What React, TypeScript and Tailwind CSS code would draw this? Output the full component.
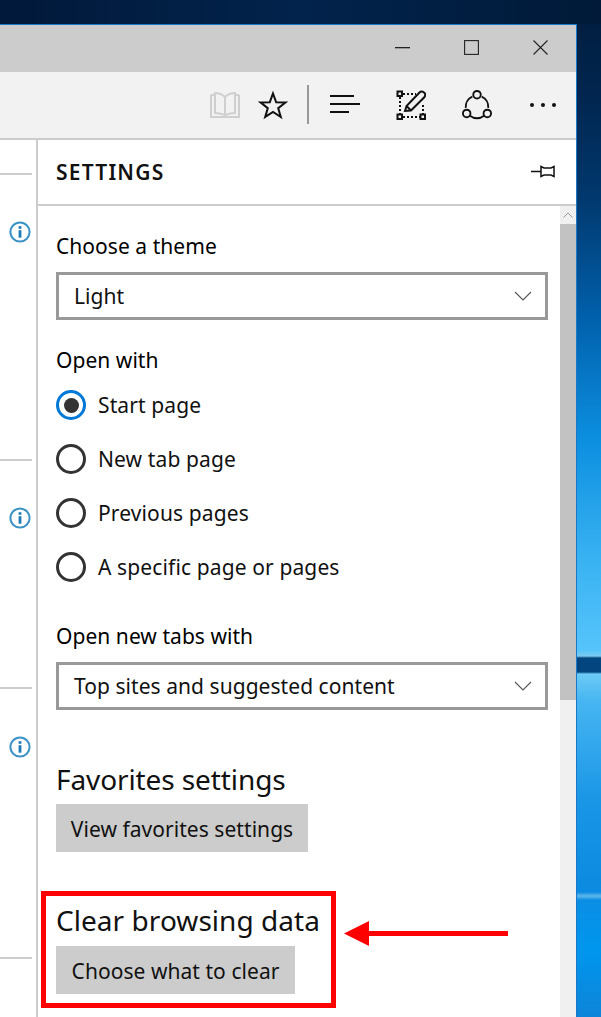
const Chevron = () => (
  <svg width="18" height="10" viewBox="0 0 18 10" className="shrink-0" fill="none" stroke="#555" strokeWidth="1.1">
    <path d="M1 1l8 8 8-8" />
  </svg>
);

const Select = ({ label }: { label: string }) => (
  <div className="flex h-[48px] w-[492px] items-center justify-between border-[3px] border-[#999] bg-white pl-[15px] pr-[13px]">
    <span className="text-[#111]">{label}</span>
    <Chevron />
  </div>
);

const Radio = ({ label, checked }: { label: string; checked?: boolean }) => (
  <div className="flex h-[54px] items-center gap-[12px]">
    {checked ? (
      <div className="flex h-[30px] w-[30px] items-center justify-center rounded-full border-[3px] border-[#0078d7]">
        <div className="h-[15px] w-[15px] rounded-full bg-[#333]" />
      </div>
    ) : (
      <div className="h-[30px] w-[30px] rounded-full border-[3px] border-[#333]" />
    )}
    <span className="tracking-[0.12px] text-[#111]">{label}</span>
  </div>
);

const Info = () => (
  <svg width="22" height="22" viewBox="0 0 22 22" fill="none">
    <circle cx="11" cy="11" r="9.6" stroke="#3d93c6" strokeWidth="2" />
    <rect x="9.6" y="9.2" width="2.8" height="7.5" fill="#1d7cb8" />
    <rect x="9.6" y="5.2" width="2.8" height="2.6" fill="#1d7cb8" />
  </svg>
);

const LeftRow = ({ h, icon, gap }: { h: string; icon?: boolean; gap?: string }) => (
  <div className={`flex flex-col ${h}`}>
    <div className="h-[2px] w-[32px] bg-[#ccc]" />
    {icon && (
      <div className={`ml-[9px] ${gap ?? "mt-[46px]"}`}>
        <Info />
      </div>
    )}
  </div>
);

export default function App() {
  return (
    <div
      className="relative h-[1017px] w-[601px] overflow-hidden bg-[linear-gradient(180deg,#001c3c_0px,#012650_100px,#01396f_200px,#0161ad_320px,#0c8fe0_440px,#39b2f2_560px,#56c4fb_650px,#7acbf0_656px,#03457f_658px,#03457f_672px,#6ccbf5_674px,#47b6f2_700px,#1a96e6_800px,#0a8ae0_892px,#5fb8ea_896px,#0a8ee4_900px,#0096ee_950px,#0d84d8_1017px)] font-['Noto_Sans',sans-serif] text-[21px] leading-[28px] tracking-[0.05px]"
    >
      <div className="h-[24px] bg-[linear-gradient(90deg,#01193a,#02234c_50%,#001a38)]" />
      <div className="flex h-[993px] w-[577px] flex-col border-r border-t border-[#1a78c8] bg-white">
        <div className="flex h-[47px] shrink-0 items-center bg-[#ccc] pb-[2px] pl-[395px]">
          <svg width="15" height="2" viewBox="0 0 15 2"><rect width="15" height="1.3" fill="#222" /></svg>
          <svg className="ml-[54px]" width="15" height="15" viewBox="0 0 15 15" fill="none" stroke="#222" strokeWidth="1.1"><rect x="0.6" y="0.6" width="13.800" height="13.800" /></svg>
          <svg className="ml-[54px]" width="15" height="15" viewBox="0 0 15 15" fill="none" stroke="#222" strokeWidth="1.1"><path d="M.5.5l14 14M14.500.5l-14 14" /></svg>
        </div>

        <div className="relative flex h-[68px] shrink-0 items-center border-b-2 border-[#ccc] bg-[#f2f2f2] pb-[1px] pl-[210px]">
          <svg width="30" height="28" viewBox="0 0 30 28" fill="none" stroke="#cfcfcf" strokeWidth="2">
            <path d="M1 4h4M25 4h4M1 4v22h28V4M15 6v18M15 6c-3-3-7-4-10-4v20c3 0 7 1 10 2 3-1 7-2 10-2V2c-3 0-7 1-10 4Z" />
          </svg>
          <svg className="ml-[18px]" width="30" height="30" viewBox="0 0 30 30" fill="none" stroke="#111" strokeWidth="2">
            <path d="M15 3.500l3.200 8.800 9.300.2-7.300 5.700 2.600 8.800L15 22l-7.800 4.900 2.600-8.800-7.300-5.700 9.300-.2Z" />
          </svg>
          <div className="ml-[19px] h-[39px] w-[2px] bg-[#999]" />
          <svg className="ml-[21px]" width="30" height="22" viewBox="0 0 30 22" fill="none" stroke="#111" strokeWidth="2">
            <path d="M0 2h24M0 10h30M0 18h19" />
          </svg>
          <svg className="ml-[36px]" width="30" height="30" viewBox="0 0 30 30" fill="none">
            <path d="M7 4h13M4 7v17M7 27h17M27 15v9" stroke="#111" strokeWidth="2" strokeDasharray="2 2" />
            <rect x="1.500" y="1.500" width="4.500" height="4.500" stroke="#111" strokeWidth="2" />
            <rect x="1.500" y="24.500" width="4.500" height="4.500" stroke="#111" strokeWidth="2" />
            <rect x="24.500" y="24.500" width="4.500" height="4.500" stroke="#111" strokeWidth="2" />
            <path d="M9 21l1.500-5L23.500 2.500c1-1 3-1.200 4.500 0s1.500 3 .5 4.500L15 20.500Z M10.500 16l4.500 4.500" stroke="#111" strokeWidth="2" />
          </svg>
          <svg className="ml-[36px]" width="30" height="30" viewBox="0 0 32 32" fill="none" stroke="#111" strokeWidth="2">
            <path d="M11 7a12 12 0 0 0-7 12M28 19a12 12 0 0 0-7-12M8.500 27.500a12 12 0 0 0 15 0" />
            <circle cx="16" cy="5" r="4" />
            <circle cx="5" cy="25" r="4" />
            <circle cx="27" cy="25" r="4" />
          </svg>
          <div className="ml-[38px] flex gap-[7px]">
            <div className="h-[4px] w-[4px] rounded-full bg-[#111]" />
            <div className="h-[4px] w-[4px] rounded-full bg-[#111]" />
            <div className="h-[4px] w-[4px] rounded-full bg-[#111]" />
          </div>
        </div>

        <div className="flex min-h-0 flex-1">
          <div className="flex w-[38px] shrink-0 flex-col border-r-2 border-[#ccc] pt-[33px]">
            <LeftRow h="h-[286px]" icon />
            <LeftRow h="h-[228px]" icon />
            <LeftRow h="h-[270px]" icon gap="mt-[47px]" />
            <LeftRow h="h-[40px]" />
          </div>

          <div className="flex min-w-0 flex-1 flex-col">
            <div className="flex h-[66px] shrink-0 items-center justify-between border-b-2 border-[#ccc] pl-[18px] pr-[21px]">
              <span className="text-[21px] font-semibold tracking-[1.2px] text-[#111]">SETTINGS</span>
              <svg width="24" height="16" viewBox="0 0 24 16" fill="none" stroke="#111" strokeWidth="1.5">
                <path d="M0 7.500h10M10 2.500l3 1.500h7l3-1.500v10l-3-1.500h-7l-3 1.500Z" />
              </svg>
            </div>

            <div className="flex min-h-0 flex-1">
              <div className="flex flex-1 flex-col pl-[18px] pt-[26px]">
                <div className="mb-[12px]">Choose a theme</div>
                <Select label="Light" />
                <div className="mt-[26px]">Open with</div>
                <div className="mt-[4px]">
                  <Radio label="Start page" checked />
                  <Radio label="New tab page" />
                  <Radio label="Previous pages" />
                  <Radio label="A specific page or pages" />
                </div>
                <div className="mt-[28px] mb-[12px]">Open new tabs with</div>
                <Select label="Top sites and suggested content" />
                <div className="mt-[49px] text-[28px] leading-[40px] tracking-[-0.1px] text-[#111]">Favorites settings</div>
                <div className="mt-[5px] flex h-[48px] w-[252px] items-center justify-center bg-[#ccc] pt-[2px] text-[#111]">View favorites settings</div>
                <div className="mt-[48px] text-[28px] leading-[40px] text-[#111]">Clear browsing data</div>
                <div className="mt-[6px] flex h-[48px] w-[239px] items-center justify-center bg-[#ccc] pt-[2px] text-[#111]">Choose what to clear</div>
              </div>

              <div className="flex w-[16px] shrink-0 flex-col bg-[#f0f0f0]">
                <div className="flex h-[18px] shrink-0 items-center justify-center">
                  <svg width="10" height="6" viewBox="0 0 10 6" fill="none" stroke="#999" strokeWidth="1"><path d="M.5 5.500L5 1l4.500 4.500" /></svg>
                </div>
                <div className="h-[476px] bg-[#c2c2c2]" />
              </div>
            </div>
          </div>
        </div>
      </div>

      <div className="absolute left-[41px] top-[891px] h-[117px] w-[295px] border-[5px] border-[#f00]" />
      <svg className="absolute left-[344px] top-[921px]" width="165" height="25" viewBox="0 0 165 25" fill="#f00">
        <path d="M0 12.500L25 0v10h139v5H25v10Z" />
      </svg>
    </div>
  );
}
